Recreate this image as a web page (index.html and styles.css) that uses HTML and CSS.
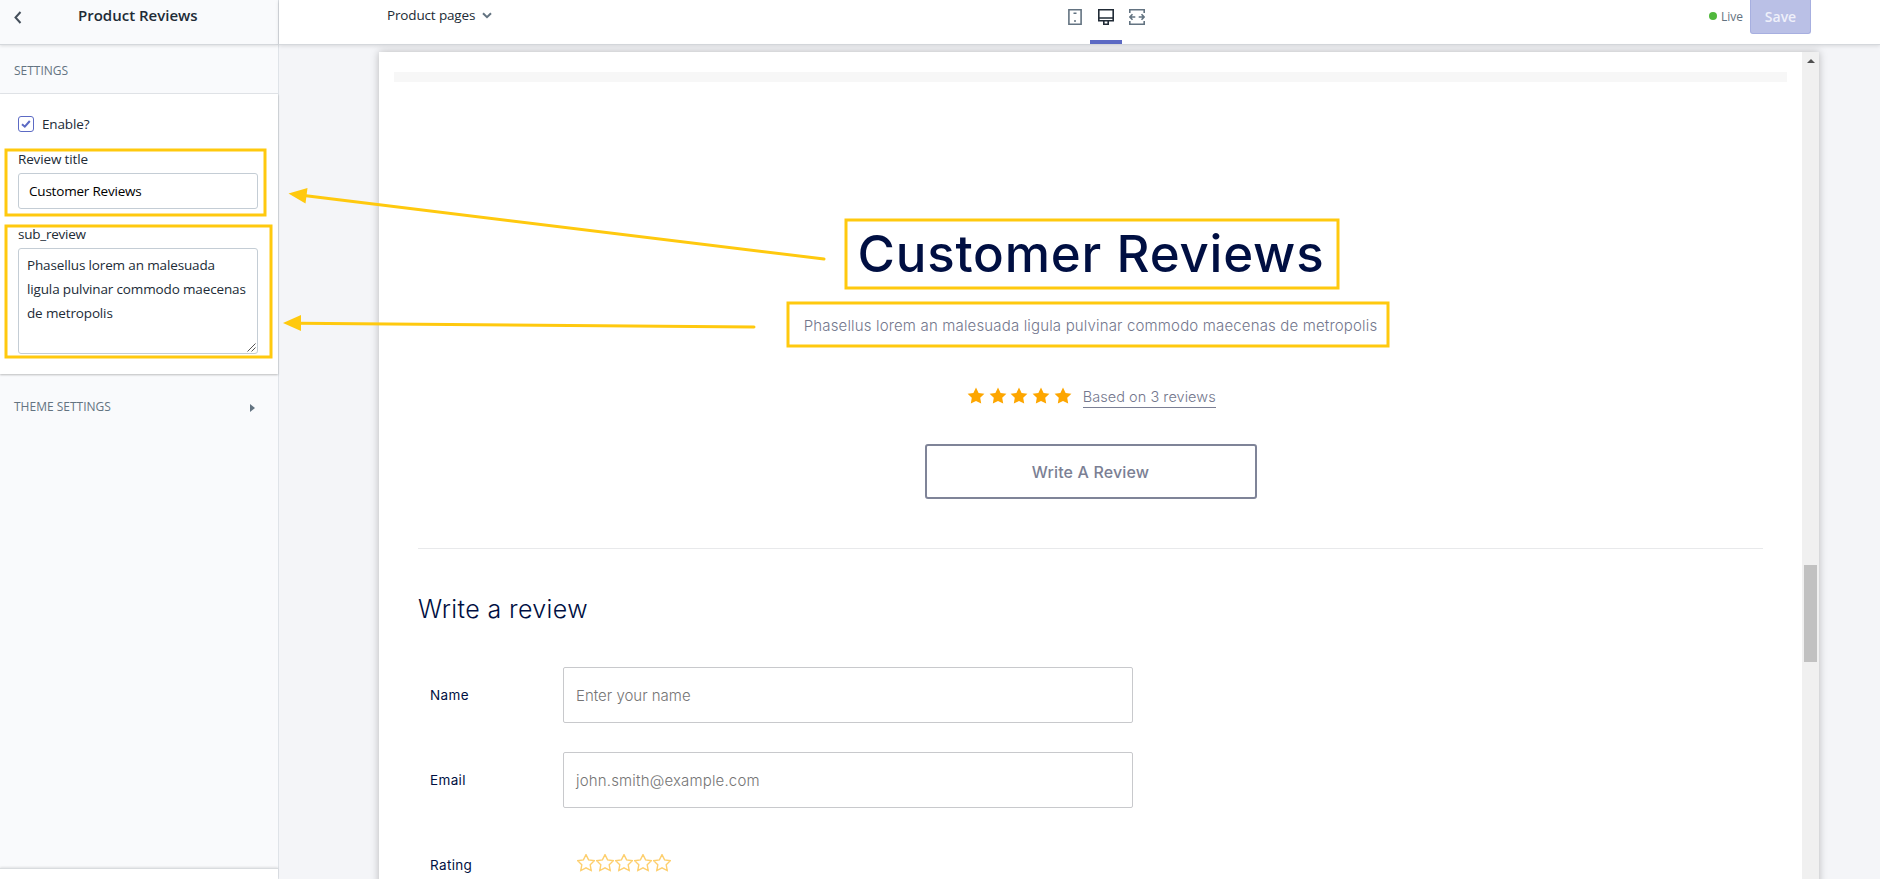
FILE: index.html
```html
<!DOCTYPE html>
<html lang="en">
<head>
<meta charset="utf-8">
<title>Product Reviews</title>
<link rel="stylesheet" href="styles.css">
</head>
<body>
<svg class="defs" width="0" height="0" aria-hidden="true">
  <symbol id="star" viewBox="0 0 18 18"><path d="M9 .6l2.600 5.300 5.800.8-4.200 4.100 1 5.800L9 13.900l-5.200 2.700 1-5.800L.6 6.700l5.800-.8z"/></symbol>
</svg>
<div class="app">
  <aside class="sidebar">
    <header class="side-head">
      <svg class="back" width="8" height="13" viewBox="0 0 8 13"><path d="M6.500 1L1.500 6.500l5 5.500"/></svg>
      <h1>Product Reviews</h1>
    </header>
    <div class="section-label">SETTINGS</div>
    <form class="settings">
      <label class="check"><span class="box"><svg width="16" height="16" viewBox="0 0 16 16"><path d="M4 8.200l2.800 2.500 5-5.700"/></svg></span><span class="check-text">Enable?</span></label>
      <label class="lbl">Review title</label>
      <div class="field">Customer Reviews</div>
      <label class="lbl second">sub_review</label>
      <div class="area">
        <span>Phasellus lorem an malesuada</span><br><span>ligula pulvinar commodo maecenas</span><br><span>de metropolis</span>
        <svg class="grip" width="9" height="9" viewBox="0 0 9 9"><path d="M.5 8.500l8-8M4.500 8.500l4-4"/></svg>
      </div>
    </form>
    <div class="theme"><span>THEME SETTINGS</span><i class="caret"></i></div>
    <footer class="side-foot"></footer>
  </aside>
  <main class="stage">
    <nav class="topbar">
      <div class="pages"><span>Product pages</span><svg width="10" height="7" viewBox="0 0 10 7"><path d="M1 1.200l4 4 4-4"/></svg></div>
      <div class="devices">
        <span class="device"><svg width="14" height="16" viewBox="0 0 14 16"><path d="M.9.800h12.200v14.400H.9zM5.500 4.200h3M6 12h2"/></svg></span>
        <span class="device on"><svg width="16" height="16" viewBox="0 0 16 16"><path d="M.8.800h14.400v11H.8zM1 9h14M5.800 12v3.200h4.400V12"/></svg></span>
        <span class="device last"><svg width="16" height="16" viewBox="0 0 16 16"><path d="M.8 4V.800h14.400V4M.8 12v3.200h14.400V12M6.300 8H1M9.700 8H15M3.500 5.300L.9 8l2.600 2.700M12.500 5.300L15.100 8l-2.600 2.700"/></svg></span>
      </div>
      <div class="actions"><i class="dot"></i><span class="live">Live</span><button class="save">Save</button></div>
    </nav>
    <div class="preview">
      <div class="page">
        <div class="strip"></div>
        <h2 class="title">Customer Reviews</h2>
        <p class="subtitle">Phasellus lorem an malesuada ligula pulvinar commodo maecenas de metropolis</p>
        <div class="summary">
          <div class="stars"><svg><use href="#star"/></svg><svg><use href="#star"/></svg><svg><use href="#star"/></svg><svg><use href="#star"/></svg><svg><use href="#star"/></svg></div>
          <a class="based">Based on 3 reviews</a>
        </div>
        <div class="write">Write A Review</div>
        <div class="form">
          <h3>Write a review</h3>
          <div class="row"><label>Name</label><div class="input">Enter your name</div></div>
          <div class="row"><label>Email</label><div class="input email">john.smith@example.com</div></div>
          <div class="row"><label>Rating</label><div class="rate"><svg><use href="#star"/></svg><svg><use href="#star"/></svg><svg><use href="#star"/></svg><svg><use href="#star"/></svg><svg><use href="#star"/></svg></div></div>
        </div>
      </div>
      <div class="scroll"><i class="up"></i><i class="thumb"></i></div>
    </div>
  </main>
</div>
<svg class="marks" width="1880" height="879" viewBox="0 0 1880 879">
  <g class="frames">
    <rect x="6" y="150" width="259" height="65"/>
    <rect x="6" y="226" width="265" height="131"/>
    <rect x="846" y="220" width="492" height="68"/>
    <rect x="788" y="303" width="600" height="43"/>
  </g>
  <path class="line" d="M824 259L304 195.500M754 327L298 323.300"/>
  <path class="tip" d="M288.500 193.500L307.500 188l-2 15.500zM283 323L301 315v16z"/>
</svg>
</body>
</html>
```
FILE: styles.css
```css
* { box-sizing: border-box; }
body { margin: 0; font-family: "Open Sans", "Noto Sans", sans-serif; font-size: 13.5px; letter-spacing: -.15px; color: #212b36; white-space: nowrap; }
h1, h2, h3, p { margin: 0; font-weight: 400; }
svg { display: block; fill: none; flex: none; }
.defs { position: absolute; }
.app { display: flex; height: 879px; overflow: hidden; background: #f4f5f8; }

.sidebar { width: 279px; flex: none; display: flex; flex-direction: column; background: #f9fafc; border-right: 1px solid #dfe3e8; }
.side-head { height: 45px; padding: 0 14px; display: flex; align-items: flex-start; border-bottom: 1px solid #d5d8dc; box-shadow: 0 1px 3px rgba(0,0,0,.12); }
.back { margin-top: 11px; stroke: #454f5b; stroke-width: 2; }
.side-head h1 { margin-left: 56px; font-size: 15px; font-weight: 600; line-height: 30px; letter-spacing: 0; }
.section-label { height: 49px; padding-left: 14px; line-height: 52px; font-size: 12px; font-weight: 500; letter-spacing: 0; color: #637381; border-bottom: 1px solid #e3e6ea; }
.settings { height: 280px; padding: 22px 20px 0 18px; background: #fff; box-shadow: 0 1px 2px rgba(0,0,0,.25); }
.check { display: flex; align-items: center; height: 16px; gap: 8px; }
.check-text { line-height: 16px; padding-bottom: 1px; }
.box { width: 16px; height: 16px; border: 1px solid #5c6ac4; border-radius: 3px; }
.box svg { margin: -1px; stroke: #5c6ac4; stroke-width: 2; }
.lbl { display: block; margin-top: 17px; height: 24px; line-height: 20px; }
.lbl.second { margin-top: 15px; letter-spacing: -.25px; }
.field { height: 36px; padding-left: 10px; line-height: 35px; border: 1px solid #c4cdd5; border-radius: 3px; color: #000; letter-spacing: -.2px; }
.area { position: relative; height: 106px; padding: 4px 8px; line-height: 24px; border: 1px solid #c4cdd5; border-radius: 3px; letter-spacing: -.14px; }
.grip { position: absolute; right: 1px; bottom: 1px; stroke: #555; stroke-width: 1; }
.theme { flex: 1; display: flex; justify-content: space-between; align-items: flex-start; padding: 23px 23px 0 14px; font-size: 12px; font-weight: 500; letter-spacing: 0; line-height: 20px; color: #637381; }
.caret { margin-top: 7px; border-left: 5px solid #637381; border-top: 4px solid transparent; border-bottom: 4px solid transparent; }
.side-foot { height: 11px; background: #fff; border-top: 1px solid #d9dcdf; box-shadow: 0 -1px 2px rgba(0,0,0,.1); }

.stage { flex: 1; display: flex; flex-direction: column; }
.topbar { height: 45px; flex: none; display: flex; align-items: flex-start; padding: 0 69px 0 108px; background: #fff; border-bottom: 1px solid #d5d8dc; box-shadow: 0 1px 4px rgba(0,0,0,.12); }
.pages { flex: none; display: flex; align-items: center; gap: 7px; width: 672px; height: 30px; }
.pages svg { stroke: #637381; stroke-width: 2; }
.devices { display: flex; margin-right: auto; }
.device { width: 31px; height: 44px; padding-top: 9px; display: flex; justify-content: center; }
.device.last { width: 30px; }
.device svg { stroke: #637381; stroke-width: 1.600; }
.device.on { width: 32px; border-bottom: 4px solid #5c6ac4; }
.device.on svg { stroke: #212b36; }
.actions { display: flex; align-items: flex-start; letter-spacing: 0; }
.dot { width: 8px; height: 8px; margin-top: 12px; border-radius: 50%; background: #50b83c; }
.live { width: 33px; padding-left: 4px; font-size: 12px; line-height: 33px; color: #637381; }
.save { width: 61px; height: 34px; padding: 0; font: 600 14px/32px "Open Sans", sans-serif; color: #eff0fa; background: #bac0e6; border: 1px solid #a7afe0; border-top: 0; border-radius: 0 0 3px 3px; }

.preview { margin: 7px 61px 0 100px; flex: 1; display: flex; background: #fff; box-shadow: 0 0 8px rgba(0,0,0,.25); font-family: Inter, sans-serif; letter-spacing: 0; }
.page { flex: 1; display: flex; flex-direction: column; align-items: center; padding: 20px 15px 0; }
.strip { align-self: stretch; height: 10px; background: #f7f7f7; }
.title { height: 70px; margin-top: 138px; padding-left: 1px; font-size: 51px; font-weight: 500; letter-spacing: .8px; line-height: 67px; color: #000f42; }
.subtitle { height: 40px; margin-top: 15px; font-size: 15px; letter-spacing: .16px; line-height: 42px; font-weight: 300; color: #73778d; }
.summary { display: flex; margin-top: 40px; height: 25px; gap: 11px; padding-left: 2px; }
.stars { display: flex; gap: 3.600px; padding-top: 2px; }
.stars svg { width: 18px; height: 18px; fill: #fda600; }
.based { height: 23px; font-size: 14.500px; letter-spacing: .05px; line-height: 23px; font-weight: 300; color: #73778d; border-bottom: 1px solid #7b7f94; }
.write { width: 332px; height: 55px; margin-top: 34px; border: 2px solid #7f8498; border-radius: 3px; text-align: center; font-size: 16px; letter-spacing: .15px; font-weight: 500; line-height: 53px; color: #7b7f94; }
.form { width: 1345px; margin-top: 49px; border-top: 1px solid #e8e9eb; color: #000f42; }
.form h3 { height: 70px; margin-top: 24px; padding-top: 16px; font-size: 25px; letter-spacing: .38px; font-weight: 300; line-height: 40px; }
.row { display: flex; height: 56px; margin: 24px 0 29px; padding-left: 12px; }
.row + .row { margin-top: 0; }
.row label { width: 133px; font-size: 13.500px; letter-spacing: .35px; line-height: 56px; }
.input { width: 570px; padding-left: 12px; border: 1px solid #c8c9cc; border-radius: 2px; font-size: 15px; letter-spacing: 0; line-height: 55px; color: #757575; font-weight: 300; }
.email { letter-spacing: .17px; }
.rate { display: flex; gap: 1px; padding: 17px 0 0 14px; }
.rate svg { width: 18px; height: 18px; stroke: #fdcf6e; stroke-width: 1.400; }
.scroll { width: 17px; background: #f0f0f0; display: flex; flex-direction: column; align-items: center; }
.up { margin-top: 7px; border-bottom: 4px solid #505050; border-left: 4px solid transparent; border-right: 4px solid transparent; }
.thumb { width: 13px; height: 97px; margin-top: 502px; background: #c1c1c1; }

.marks { position: absolute; left: 0; top: 0; pointer-events: none; }
.frames rect { stroke: #ffc90e; stroke-width: 3; }
.line { stroke: #ffc90e; stroke-width: 3; stroke-linecap: round; }
.tip { fill: #ffc90e; }
```
